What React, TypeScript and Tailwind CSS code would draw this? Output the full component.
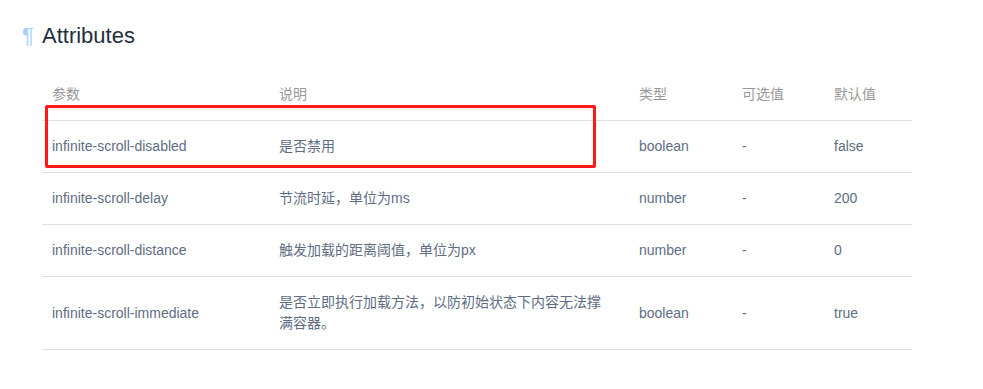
import React from "react";

const rows: [string, string, string, string, string][] = [
  ["infinite-scroll-disabled", "是否禁用", "boolean", "-", "false"],
  ["infinite-scroll-delay", "节流时延，单位为ms", "number", "-", "200"],
  ["infinite-scroll-distance", "触发加载的距离阈值，单位为px", "number", "-", "0"],
  [
    "infinite-scroll-immediate",
    "是否立即执行加载方法，以防初始状态下内容无法撑满容器。",
    "boolean",
    "-",
    "true",
  ],
];

export default function App() {
  return (
    <div
      className="relative w-[983px] h-[389px] bg-white overflow-hidden"
      style={{ fontFamily: '"Liberation Sans", "Noto Sans CJK SC", sans-serif' }}
    >
      <div className="pl-[42px] pt-[25px]">
        <h3 className="relative text-[22px] leading-[22px] font-normal text-[#1f2f3d]">
          <span className="absolute left-[-20px] top-0 text-[#a6d0fb]">¶</span>
          Attributes
        </h3>
        <table className="mt-[22px] w-[870px] border-collapse text-[14px] leading-[21px] table-fixed">
          <colgroup>
            <col className="w-[227px]" />
            <col className="w-[360px]" />
            <col className="w-[103px]" />
            <col className="w-[92px]" />
            <col className="w-[88px]" />
          </colgroup>
          <thead>
            <tr className="border-b border-[#dcdfe6]">
              <th className="py-[15px] pl-[10px] pr-[15px] text-left font-normal text-[#999] whitespace-nowrap">参数</th>
              <th className="py-[15px] px-[10px] text-left font-normal text-[#999] whitespace-nowrap">说明</th>
              <th className="py-[15px] px-[10px] text-left font-normal text-[#999] whitespace-nowrap">类型</th>
              <th className="py-[15px] px-[10px] text-left font-normal text-[#999] whitespace-nowrap">可选值</th>
              <th className="py-[15px] px-[10px] text-left font-normal text-[#999] whitespace-nowrap">默认值</th>
            </tr>
          </thead>
          <tbody>
            {rows.map((r) => (
              <tr key={r[0]} className="border-b border-[#dcdfe6] text-[#5e6d82]">
                <td className="py-[15px] pl-[10px] pr-[15px] align-middle">{r[0]}</td>
                <td className="py-[15px] pl-[10px] pr-[15px] align-middle">{r[1]}</td>
                <td className="py-[15px] px-[10px] align-middle">{r[2]}</td>
                <td className="py-[15px] px-[10px] align-middle">{r[3]}</td>
                <td className="py-[15px] px-[10px] align-middle">{r[4]}</td>
              </tr>
            ))}
          </tbody>
        </table>
      </div>
      <div className="absolute left-[45px] top-[105px] w-[551px] h-[63px] border-[3px] border-[#ff1a1a] rounded-[2px]" />
    </div>
  );
}
